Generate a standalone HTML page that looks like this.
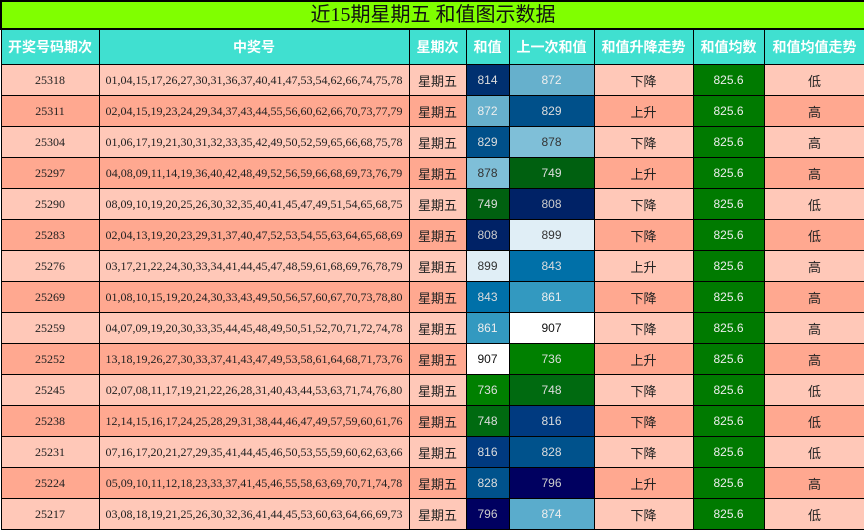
<!DOCTYPE html><html><head><meta charset="utf-8"><style>
body{margin:0;width:864px;height:530px;background:#fff;overflow:hidden}
table{border-collapse:collapse;position:absolute;left:0;top:0;width:864px;table-layout:fixed}
td{border:1px solid #000;text-align:center;padding:0;font-family:"Liberation Serif","Noto Sans CJK SC",serif;font-size:12px;height:30px;color:#222;white-space:nowrap;overflow:hidden}
.t td{background:#80ff00;height:26px;line-height:26px;font-size:20px;border:2px solid #000;font-family:"Liberation Serif","Noto Sans CJK SC",serif;color:#111}
.h td{background:#40e0d0;color:#fff;font-weight:bold;font-size:14px;height:34px;font-family:"Liberation Sans","Noto Sans CJK SC",sans-serif}
.a td{background:#ffc8b8}.b td{background:#ffa890}
td.c{font-family:"Liberation Sans","Noto Sans CJK SC",sans-serif;font-size:13px}
td.g{background:#007a00!important;color:#eee;font-family:"Liberation Sans",sans-serif}
td.v{font-family:"Liberation Sans",sans-serif}
</style></head><body>
<table>
<colgroup><col style="width:98px"><col style="width:310px"><col style="width:57px"><col style="width:43px"><col style="width:85px"><col style="width:99px"><col style="width:71px"><col style="width:101px"></colgroup>
<tr class="t"><td colspan="8">近15期星期五 和值图示数据</td></tr>
<tr class="h"><td>开奖号码期次</td><td>中奖号</td><td>星期次</td><td>和值</td><td>上一次和值</td><td>和值升降走势</td><td>和值均数</td><td>和值均值走势</td></tr>
<tbody id="b"></tbody>
</table>
<script>
var rows=[["25318","01,04,15,17,26,27,30,31,36,37,40,41,47,53,54,62,66,74,75,78",814,872,"下降","低"],
["25311","02,04,15,19,23,24,29,34,37,43,44,55,56,60,62,66,70,73,77,79",872,829,"上升","高"],
["25304","01,06,17,19,21,30,31,32,33,35,42,49,50,52,59,65,66,68,75,78",829,878,"下降","高"],
["25297","04,08,09,11,14,19,36,40,42,48,49,52,56,59,66,68,69,73,76,79",878,749,"上升","高"],
["25290","08,09,10,19,20,25,26,30,32,35,40,41,45,47,49,51,54,65,68,75",749,808,"下降","低"],
["25283","02,04,13,19,20,23,29,31,37,40,47,52,53,54,55,63,64,65,68,69",808,899,"下降","低"],
["25276","03,17,21,22,24,30,33,34,41,44,45,47,48,59,61,68,69,76,78,79",899,843,"上升","高"],
["25269","01,08,10,15,19,20,24,30,33,43,49,50,56,57,60,67,70,73,78,80",843,861,"下降","高"],
["25259","04,07,09,19,20,30,33,35,44,45,48,49,50,51,52,70,71,72,74,78",861,907,"下降","高"],
["25252","13,18,19,26,27,30,33,37,41,43,47,49,53,58,61,64,68,71,73,76",907,736,"上升","高"],
["25245","02,07,08,11,17,19,21,22,26,28,31,40,43,44,53,63,71,74,76,80",736,748,"下降","低"],
["25238","12,14,15,16,17,24,25,28,29,31,38,44,46,47,49,57,59,60,61,76",748,816,"下降","低"],
["25231","07,16,17,20,21,27,29,35,41,44,45,46,50,53,55,59,60,62,63,66",816,828,"下降","低"],
["25224","05,09,10,11,12,18,23,33,37,41,45,46,55,58,63,69,70,71,74,78",828,796,"上升","高"],
["25217","03,08,18,19,21,25,26,30,32,36,41,44,45,53,60,63,64,66,69,73",796,874,"下降","低"]];
var col={814:["#003070","#ddd"],872:["#66b0cc","#eee"],829:["#00508a","#ddd"],878:["#7fbfd8","#333"],749:["#006010","#ddd"],808:["#002266","#ccc"],899:["#e0eef6","#333"],843:["#0070a8","#ddd"],861:["#3399c0","#eee"],907:["#ffffff","#111"],736:["#008000","#ddd"],748:["#006a10","#ddd"],816:["#003a80","#ddd"],828:["#00528c","#ddd"],796:["#000060","#ccc"],874:["#5aaccc","#eee"]};
function v(n){var c=col[n];return '<td class="v" style="background:'+c[0]+';color:'+c[1]+'">'+n+'</td>'}
var h='';rows.forEach(function(r,i){h+='<tr class="'+(i%2?'b':'a')+'"><td>'+r[0]+'</td><td>'+r[1]+'</td><td class="c">星期五</td>'+v(r[2])+v(r[3])+'<td class="c">'+r[4]+'</td><td class="g">825.6</td><td class="c">'+r[5]+'</td></tr>'});
document.getElementById('b').innerHTML=h;
</script>
</body></html>
